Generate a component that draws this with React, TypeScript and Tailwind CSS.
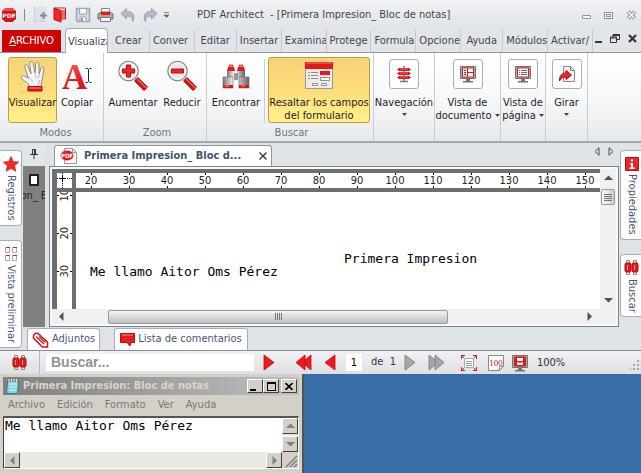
import React from 'react';

const redFill = '#e8191c';

function PdfMark() {
  return (
    <svg width="16" height="16" viewBox="0 0 16 16">
      <path d="M4.500 1h7L15 4v8l-3.500 3h-7L1 12V4z" fill="#d41418" />
      <path d="M1 4h14L11.500 1h-7z" fill="#ef4a4a" />
      <text x="8" y="10.500" fontSize="6" fontWeight="bold" textAnchor="middle" fill="#fff" fontFamily="DejaVu Sans">PDF</text>
    </svg>
  );
}

function PdfDoc() {
  return (
    <svg width="18" height="18" viewBox="0 0 18 18">
      <path d="M4.500 1.500h8l4 4v11h-12z" fill="#fafafa" stroke="#9a9a9a" />
      <path d="M12.500 1.500v4h4" fill="none" stroke="#9a9a9a" />
      <ellipse cx="7" cy="8.500" rx="6.500" ry="5" fill="#dc1a1c" />
      <text x="7" y="11" fontSize="6" fontWeight="bold" textAnchor="middle" fill="#fff" fontFamily="DejaVu Sans Condensed">PDF</text>
    </svg>
  );
}

function NewIcon() {
  return (
    <svg width="14" height="16" viewBox="0 0 14 16">
      <path d="M1 0v15h12V0" fill="#dfe3e7" />
      <path d="M1.500 0v14.500h11" fill="none" stroke="#c8cdd2" />
      <path d="M10.500 5v7M7 8.500h7" stroke="#858c92" strokeWidth="2" />
    </svg>
  );
}

function OpenIcon() {
  return (
    <svg width="14" height="16" viewBox="0 0 14 16">
      <path d="M1 1h11.500v11H8z" fill="#fff" stroke="#d01215" />
      <path d="M8 3h4v9H8z" fill="#f26a68" />
      <path d="M1 1l7 2.500V15l-7-2.500z" fill="#f0292b" stroke="#c20c10" />
    </svg>
  );
}

function SaveIcon() {
  return (
    <svg width="16" height="16" viewBox="0 0 16 16">
      <path d="M1.500 1.500h13v13h-12l-1-1z" fill="#d5d9e2" stroke="#9ea4b2" strokeWidth="1.500" />
      <path d="M4.500 2v5h7V2" fill="#f5f6f9" stroke="#9ea4b2" />
      <path d="M5 14v-4h6v4" fill="#f5f6f9" stroke="#9ea4b2" />
      <path d="M6 11h2v3H6z" fill="#8e95a5" />
    </svg>
  );
}

function PrintIcon() {
  return (
    <svg width="17" height="16" viewBox="0 0 17 16">
      <path d="M4.500 1.500h8V6h-8z" fill="#fff" stroke="#8a8a8a" />
      <path d="M1 7l3-2h9l3 2v5H1z" fill="#a9a9a9" stroke="#6c6c6c" />
      <path d="M4 5h9v3H4z" fill="#e51a1c" />
      <path d="M3.500 10.500h10v4h-10z" fill="#f6f6f6" stroke="#7b7b7b" />
    </svg>
  );
}

function UndoIcon({ flip = false }: { flip?: boolean }) {
  return (
    <svg width="16" height="16" viewBox="0 0 16 16" className={flip ? '-scale-x-100' : ''}>
      <path d="M1 6.500L6.500 1.500v3C12 4 16 8 12.500 14.500c.5-4-2-5.500-6-5.500v3z" fill="#b6b9ca" stroke="#9a9eb2" />
    </svg>
  );
}

function HandIcon() {
  return (
    <svg width="32" height="32" viewBox="0 0 32 32">
      <path d="M12.500 27c-.5-3-2.500-4.500-5-6L4.800 18.800c-1.500-1.700.4-3.800 2.300-2.800l4.400 2.200L7.800 7.500C7 4.900 9.800 4 10.800 6.300l3.200 7.500-1.300-10c-.2-2.700 2.800-3 3.400-.5l2 9.700.6-9.500c.2-2.500 3.200-2.200 3.200.2l.3 10.300 1.700-5.500c.8-2.300 3.500-1.400 3 .9L25.200 19c-.5 3-1.200 5-1.200 8z" fill="#f3f3f2" stroke="#85807a" strokeWidth=".9" />
      <path d="M11.500 18c2 .5 3.500 2 4 4M18 14l1 4M22 14.500l-.8 4M22.500 20l-1.500 6" fill="none" stroke="#bdbab5" />
      <path d="M11 26.500h14V31H11z" fill="#e3191b" stroke="#a60c10" />
      <path d="M12 28h12" stroke="#ff8b85" />
    </svg>
  );
}

function CopyTextIcon() {
  return (
    <svg width="32" height="32" viewBox="0 0 32 32">
      <defs>
        <linearGradient id="letter" x1="0" y1="0" x2="0" y2="1">
          <stop offset="0" stopColor="#ff6a60" />
          <stop offset=".5" stopColor="#e52226" />
          <stop offset="1" stopColor="#c70a10" />
        </linearGradient>
      </defs>
      <text x="1" y="29" fontSize="35" fontWeight="bold" fontFamily="Liberation Serif" fill="url(#letter)">A</text>
      <path d="M24.500 8.500h2l1 1 1-1h2M27.500 9.500v12M24.500 22.500h2l1-1 1 1h2" fill="none" stroke="#222" />
    </svg>
  );
}

function MagnifierIcon({ plus = false }: { plus?: boolean }) {
  return (
    <svg width="32" height="32" viewBox="0 0 32 32">
      <path d="M19 19l10 10" stroke="#8d0b0e" strokeWidth="5.500" />
      <path d="M19 19l10 10" stroke="#e3191b" strokeWidth="3.500" />
      <path d="M20 18.500l9.500 9.500" stroke="#ff9a94" />
      <circle cx="11.500" cy="11" r="9.700" fill="#e6e8ec" stroke="#8a8a8a" strokeWidth="1.300" />
      <circle cx="11.500" cy="11" r="8.300" fill="none" stroke="#fff" />
      <path d={plus ? 'M9.500 5h4v4h4v4h-4v4h-4v-4h-4V9h4z' : 'M5.500 9h12v4h-12z'} fill="#e8282a" stroke="#b30e12" />
    </svg>
  );
}

function BinocularsIcon() {
  return (
    <svg width="32" height="32" viewBox="0 0 32 32">
      <defs>
        <linearGradient id="tube">
          <stop offset="0" stopColor="#777" />
          <stop offset=".4" stopColor="#f6f6f6" />
          <stop offset="1" stopColor="#666" />
        </linearGradient>
      </defs>
      <path d="M9 5h4v3H9zM19 5h4v3h-4z" fill="#ff8a84" stroke="#8b1113" strokeWidth=".6" />
      <path d="M8 7h6l1 4H7zM18 7h6l1 4h-8z" fill="#e3191b" />
      <path d="M7 11h8v6H7zM17 11h8v6h-8z" fill="url(#tube)" />
      <path d="M14 13h4v7h-4z" fill="#999" />
      <path d="M3 17h10v11H3zM19 17h10v11H19z" fill="url(#tube)" stroke="#666" strokeWidth=".6" />
      <path d="M3 25h10v3H3zM19 25h10v3H19z" fill="#d91719" />
      <path d="M5 26h4M21 26h4" stroke="#ff9a94" />
    </svg>
  );
}

function FormIcon() {
  return (
    <svg width="32" height="32" viewBox="0 0 32 32">
      <path d="M2.500 2.500h27v26h-27z" fill="#ececec" stroke="#999" />
      <path d="M2 2h28v7H2z" fill="#e3191b" />
      <path d="M3 3h26" stroke="#ff7a70" />
      <path d="M5 12.500h2M8 12.500h7M5 15.500h2M8 15.500h7M5 18.500h2M8 18.500h7" stroke="#8c8c8c" />
      <path d="M17 11h10v4H17z" fill="#e3191b" />
      <path d="M17.500 17.500h9v3h-9zM9.500 23.500h5v2h-5zM18.500 23.500h5v2h-5z" fill="#fff" stroke="#8c8c8c" />
    </svg>
  );
}

function SignpostIcon() {
  return (
    <svg width="18" height="18" viewBox="0 0 18 18">
      <path d="M9 1v16M5 16.500h8" stroke="#777" strokeWidth="1.500" />
      <path d="M4 3h10l2 1.500L14 6H4L2 4.500zM4 7h10l2 1.500-2 1.500H4L2 8.500zM4 11h10l2 1.500-2 1.500H4l-2-1.500z" fill="#dc1a1c" />
      <path d="M5 4h8M5 8h8M5 12h8" stroke="#ff8a84" strokeWidth=".7" />
    </svg>
  );
}

function MonitorIcon({ kind }: { kind: 'split' | 'list' | 'fit' }) {
  return (
    <svg width="18" height="18" viewBox="0 0 18 18">
      <path d="M1.500 1.500h15v12h-15z" fill="#aaa" stroke="#737373" />
      <path d="M7 14h4v2H7zM4 16h10v1.500H4z" fill="#737373" />
      <path d="M3.500 3h11v9h-11z" fill={kind === 'fit' ? '#e01618' : '#fff'} stroke="#e01618" />
      {kind === 'split' && <path d="M8.500 3v9M9 7.500h5.500M5 5.500h2M5 7.500h2M5 9.500h2" stroke="#e01618" />}
      {kind === 'list' && <path d="M5 5.500h1M7 5.500h6M5 7.500h1M7 7.500h6M5 9.500h1M7 9.500h6" stroke="#666" />}
      {kind === 'fit' && <path d="M6 4h6v3H6zM6 8.500h6V11H6z" fill="#fff" />}
    </svg>
  );
}

function RotateIcon() {
  return (
    <svg width="18" height="18" viewBox="0 0 18 18">
      <path d="M5.500 1.500h7l4 4v11h-11z" fill="#f3f3f3" stroke="#888" />
      <path d="M12.500 1.500v4h4" fill="none" stroke="#888" />
      <path d="M1.500 16C1 11 4 8 8 8V5.500l5.500 4.500L8 14.500V12c-3 0-5 1-6.500 4z" fill="#e8282a" stroke="#a90e12" />
    </svg>
  );
}

function SmallBinoculars() {
  return (
    <svg width="15" height="17" viewBox="0 0 15 17">
      <path d="M2.500 1.500h3v3h-3zM9.500 1.500h3v3h-3zM2.500 12.500h3v3h-3zM9.500 12.500h3v3h-3z" fill="#eee" stroke="#888" />
      <rect x="1" y="4" width="6" height="9" rx="1.500" fill={redFill} stroke="#a80d10" />
      <rect x="8" y="4" width="6" height="9" rx="1.500" fill={redFill} stroke="#a80d10" />
      <path d="M3.500 6v5M10.500 6v5" stroke="#ff928c" />
    </svg>
  );
}

function StarIcon() {
  return (
    <svg width="16" height="16" viewBox="0 0 16 16">
      <path d="M8 .5l2.300 5 5.400.6-4 3.700 1.100 5.500L8 12.600l-4.800 2.700 1.100-5.500-4-3.700 5.400-.6z" fill="#ee2a2b" stroke="#c51519" strokeWidth=".6" />
    </svg>
  );
}

function ThumbsIcon() {
  return (
    <svg width="14" height="16" viewBox="0 0 14 16">
      <path d="M1.500 1.500h4v5h-4zM8.500 1.500h4v5h-4zM1.500 9.500h4v5h-4zM8.500 9.500h4v5h-4z" fill="#fff" stroke="#aaa" />
      <path d="M2 1.500h4M9 1.500h4M2 9.500h4M9 9.500h4" stroke="#d3292b" />
    </svg>
  );
}

function InfoIcon() {
  return (
    <svg width="14" height="14" viewBox="0 0 14 14">
      <path d="M.5.5h13v13H.5z" fill="#e8282a" stroke="#b50f13" />
      <path d="M6 2.500h2v2H6zM5 6h3v4.500h1.500V12h-5v-1.500H6V7.500H5z" fill="#fff" />
    </svg>
  );
}

function ClipIcon() {
  return (
    <svg width="18" height="18" viewBox="0 0 18 18">
      <path d="M6 2.500l9.500 8.500v5h-5L1.800 7.500C.5 4 3 1.500 6 2.500z" fill="#fff" stroke="#d01418" strokeWidth="1.500" />
      <path d="M4 5.500l8 7.500M7 5.500l6.500 6" fill="none" stroke="#c41418" strokeWidth="1.200" />
    </svg>
  );
}

function CommentIcon() {
  return (
    <svg width="15" height="14" viewBox="0 0 15 14">
      <path d="M.5.5h14v9H11l-1 3.500-3-3.500H.5z" fill="#e42022" stroke="#b60f13" />
      <path d="M2 2h11" stroke="#ff827a" />
    </svg>
  );
}

function Arrow({ left = false, double = false, grey = false }: { left?: boolean; double?: boolean; grey?: boolean }) {
  const fill = grey ? '#a6a6a6' : '#f01a1c';
  const edge = grey ? '#777' : '#b80c10';
  return (
    <svg width={double ? 17 : 12} height="17" viewBox={double ? '0 0 17 17' : '0 0 12 17'} className={left ? '-scale-x-100' : ''}>
      {double ? (
        <>
          <path d="M1 1l9 7.500L1 16z" fill={fill} stroke={edge} strokeWidth=".8" />
          <path d="M7 1l9 7.500L7 16z" fill={fill} stroke={edge} strokeWidth=".8" />
        </>
      ) : (
        <path d="M1 1l10 7.500L1 16z" fill={fill} stroke={edge} strokeWidth=".8" />
      )}
    </svg>
  );
}

function Triangle({ dir, className = 'fill-[#4d535c]' }: { dir: 'up' | 'down' | 'left' | 'right'; className?: string }) {
  const shapes = { up: 'M0 6l4.500-4.500L9 6z', down: 'M0 2l4.500 4.500L9 2z', left: 'M6.500 0L2 4.500 6.500 9z', right: 'M2.500 0L7 4.500 2.500 9z' };
  return (
    <svg width="9" height="9" viewBox="0 0 9 9" className={className}>
      <path d={shapes[dir]} />
    </svg>
  );
}

function Caret({ className }: { className: string }) {
  return (
    <svg width="5" height="3" viewBox="0 0 5 3" className={`fill-[#444] ${className}`}>
      <path d="M0 0h5L2.500 3z" />
    </svg>
  );
}

const ribbonTabs = ['Crear', 'Conver', 'Editar', 'Insertar', 'Examina', 'Protege', 'Formula', 'Opcione', 'Ayuda', 'Módulos', 'Activar/'];
const centredTabs = ['Crear', 'Editar', 'Ayuda'];

function BigButton({ icon, label, active = false, className }: { icon: React.ReactNode; label: React.ReactNode; active?: boolean; className: string }) {
  return (
    <button
      className={`flex h-[66px] flex-col items-center gap-1 rounded-[3px] border pt-[2px] leading-[13px] whitespace-nowrap ${className} ${
        active ? 'border-[#c29b47] bg-linear-to-b from-[#f8d479] via-[#fddc7b] to-[#fff18c]' : 'border-transparent'
      }`}
    >
      <span className="flex h-8 shrink-0 items-center">{icon}</span>
      <span>{label}</span>
    </button>
  );
}

function MenuButton({ icon, label, below = false, className }: { icon: React.ReactNode; label: React.ReactNode; below?: boolean; className: string }) {
  return (
    <button className={`flex flex-col items-center gap-[7px] border-r border-[#c9cdd2] pt-[6px] leading-[13px] whitespace-nowrap ${className}`}>
      <span className="flex h-[30px] w-[30px] shrink-0 items-center justify-center rounded-[3px] border border-[#a9acb0] bg-white">{icon}</span>
      <span>
        {label}
        {below && <Caret className="mx-auto mt-1 block" />}
      </span>
    </button>
  );
}

function Group({ title, children, className }: { title: string; children: React.ReactNode; className: string }) {
  return (
    <div className={`flex flex-col border-r border-[#c9cdd2] pt-1 ${className}`}>
      <div className="flex">{children}</div>
      <div className="pt-[2px] text-center leading-[15px] text-[#6c7486]">{title}</div>
    </div>
  );
}

function TitleBar() {
  return (
    <header className="flex h-7 items-center bg-linear-to-b from-[#f0f2f4] to-[#e0e4e8] pt-[2px] pl-[1px]">
      <PdfMark />
      <span className="ml-[7px] h-3 w-px bg-[#888]" />
      <div className="ml-2 flex items-center gap-[6px]">
        <button aria-label="Nuevo"><NewIcon /></button>
        <button aria-label="Abrir"><OpenIcon /></button>
        <button aria-label="Guardar" className="ml-[2px]"><SaveIcon /></button>
        <button aria-label="Imprimir"><PrintIcon /></button>
        <button aria-label="Deshacer"><UndoIcon /></button>
        <button aria-label="Rehacer"><UndoIcon flip /></button>
        <button aria-label="Personalizar">
          <svg width="5" height="7" viewBox="0 0 5 7"><path d="M0 .5h5M0 3h5L2.500 5.500z" fill="#666" stroke="#666" strokeWidth=".7" /></svg>
        </button>
      </div>
      <h1 className="ml-7 flex-1 truncate text-[#41454d]">PDF Architect&nbsp; - [Primera Impresion_ Bloc de notas]</h1>
      <div className="flex items-center gap-[13px] pr-1">
        <button aria-label="Minimizar" className="mt-[3px] h-1 w-[9px] rounded-[1px] border border-[#8b9097] bg-white" />
        <button aria-label="Restaurar" className="flex h-[7px] w-[9px] items-center justify-center border border-[#8b9097] bg-white">
          <span className="h-[3px] w-[5px] border border-[#8b9097]" />
        </button>
        <button aria-label="Cerrar">
          <svg width="11" height="10" viewBox="0 0 11 10">
            <path d="M2 1.500l7 7M9 1.500l-7 7" stroke="#858b92" strokeWidth="3.500" />
            <path d="M2 1.500l7 7M9 1.500l-7 7" stroke="#fff" strokeWidth="1.500" />
          </svg>
        </button>
      </div>
    </header>
  );
}

function Tabs() {
  return (
    <nav className="flex h-[25px] border-b border-[#8f979f] bg-[#e1e4e8] text-[#41454d]">
      <button className="mt-[2px] mr-1 ml-[2px] w-[59px] bg-[#cf0404] text-white"><u>A</u>RCHIVO</button>
      <button className="-mb-px w-[43px] overflow-hidden rounded-t-[4px] border border-b-0 border-[#a4abb2] bg-white pt-[2px] pl-[2px] text-left whitespace-nowrap">Visualiza</button>
      <div className="flex min-w-0 flex-1 pt-[2px]">
        {ribbonTabs.map((t) => (
          <button key={t} className={`min-w-0 flex-1 overflow-hidden border-r border-[#c6cad0] whitespace-nowrap ${centredTabs.includes(t) ? 'text-center' : 'pl-[3px] text-left'}`}>
            {t}
          </button>
        ))}
      </div>
      <div className="flex w-12 items-center justify-end gap-2 pr-1 pb-1">
        <button aria-label="Minimizar documento" className="mt-2 h-[2px] w-[7px] bg-[#333]" />
        <button aria-label="Restaurar documento">
          <svg width="10" height="9" viewBox="0 0 10 9"><path d="M3 3V.5h6.500v5H7M.5 3h6v5.500h-6zM3 1.500h6.500M.5 4h6" fill="none" stroke="#333" /></svg>
        </button>
        <button aria-label="Cerrar documento">
          <svg width="9" height="9" viewBox="0 0 9 9"><path d="M1 1l7 7M8 1L1 8" stroke="#333" strokeWidth="2.200" /></svg>
        </button>
      </div>
    </nav>
  );
}

function Ribbon() {
  return (
    <section className="flex h-[90px] border-b-2 border-[#a2a8ae] bg-linear-to-b from-white via-[#f7f8f9] to-[#e7eaed] pl-[3px]">
      <Group title="Modos" className="w-[101px] pl-[5px]">
        <BigButton icon={<HandIcon />} label="Visualizar" active className="w-[49px]" />
        <BigButton icon={<CopyTextIcon />} label="Copiar" className="w-10" />
      </Group>
      <Group title="Zoom" className="w-[103px] pl-1">
        <BigButton icon={<MagnifierIcon plus />} label="Aumentar" className="w-[50px]" />
        <BigButton icon={<MagnifierIcon />} label="Reducir" className="w-12" />
      </Group>
      <Group title="Buscar" className="w-[167px] pl-[3px]">
        <BigButton icon={<BinocularsIcon />} label="Encontrar" className="w-[52px]" />
        <span className="mt-[2px] mr-[3px] ml-[2px] w-px bg-[#c9cdd2]" />
        <BigButton icon={<FormIcon />} label={<>Resaltar los campos<br />del formulario</>} active className="w-[102px]" />
      </Group>
      <MenuButton icon={<SignpostIcon />} label="Navegación" below className="w-[61px]" />
      <MenuButton icon={<MonitorIcon kind="split" />} label={<>Vista de<br />documento<Caret className="mb-[2px] ml-[3px] inline" /></>} className="w-[66px]" />
      <MenuButton icon={<MonitorIcon kind="list" />} label={<>Vista de<br />página<Caret className="mb-[2px] ml-[3px] inline" /></>} className="w-[45px]" />
      <MenuButton icon={<RotateIcon />} label="Girar" below className="w-[42px]" />
    </section>
  );
}

const ruler = [20, 30, 40, 50, 60, 70, 80, 90, 100, 110, 120, 130, 140, 150];

function SideTab({ icon, label, right = false, className }: { icon: React.ReactNode; label: string; right?: boolean; className: string }) {
  return (
    <button
      className={`flex w-[22px] flex-col items-center gap-[3px] border border-[#a9aeb4] bg-white text-[#4a5674] ${right ? 'rounded-l-[4px] border-r-0' : 'rounded-r-[4px] border-l-0'} ${className}`}
    >
      {icon}
      <span className="leading-4 whitespace-nowrap [writing-mode:vertical-rl]">{label}</span>
    </button>
  );
}

function Document() {
  return (
    <main className="flex h-[182px] min-w-0 flex-1 flex-col">
      <div className="flex h-[21px] pl-[5px]">
        <div className="z-10 flex w-[218px] items-center gap-[6px] rounded-t-[3px] border border-b-0 border-[#8e969e] bg-white pr-1 pl-[5px] font-bold text-[#3c546e]">
          <PdfDoc />
          <span className="min-w-0 flex-1 whitespace-nowrap">Primera Impresion_ Bloc d...</span>
          <button aria-label="Cerrar pestaña">
            <svg width="8" height="8" viewBox="0 0 8 8"><path d="M.5.5l7 7M7.500.500l-7 7" stroke="#333" strokeWidth="1.300" /></svg>
          </button>
        </div>
        <div className="flex flex-1 items-center justify-end gap-2 pr-[5px] pb-2">
          <button aria-label="Anterior"><svg width="6" height="9" viewBox="0 0 6 9"><path d="M5 .7L1 4.500l4 3.800z" fill="none" stroke="#444" /></svg></button>
          <button aria-label="Siguiente"><svg width="6" height="9" viewBox="0 0 6 9"><path d="M1 .7l4 3.800-4 3.800z" fill="none" stroke="#444" /></svg></button>
        </div>
      </div>
      <div className="flex min-h-0 flex-1 flex-col border border-[#6f8799] bg-[#f8f8f6] p-[2px]">
        <div className="flex min-h-0 flex-1">
          <div className="flex min-w-0 flex-1 flex-col gap-1 bg-[#6e6e6e] pt-1 pl-[5px]">
            <div className="flex h-[15px] shrink-0 gap-1">
              <div className="flex w-[15px] shrink-0 items-center justify-center bg-white">
                <svg width="15" height="15" viewBox="0 0 15 15"><path d="M0 5.500h15M5.500 0v15" stroke="#000" strokeDasharray="1 1" /><path d="M3 5.500h5M5.500 3v5" stroke="#000" /></svg>
              </div>
              <div className="min-w-0 flex-1 overflow-hidden bg-white">
                <div className="-mr-1 -ml-1 flex">
                  {ruler.map((n) => (
                    <span key={n} className="flex flex-1 flex-col items-center leading-[11px] text-[#222]">
                      <i className="h-[2px] w-px bg-black" />
                      {n}
                      <i className="h-[2px] w-px bg-black" />
                    </span>
                  ))}
                </div>
              </div>
            </div>
            <div className="flex min-h-0 flex-1 gap-1">
              <div className="flex w-[15px] shrink-0 flex-col overflow-hidden bg-white">
                {[10, 20, 30].map((n) => (
                  <span key={n} className={`flex h-[38px] w-[15px] shrink-0 items-center leading-[11px] text-[#222] ${n === 10 ? '-mt-4' : ''}`}>
                    <i className="h-px w-[2px] bg-black" />
                    <span className="rotate-180 [writing-mode:vertical-rl]">{n}</span>
                    <i className="h-px w-[2px] bg-black" />
                  </span>
                ))}
              </div>
              <div className="min-w-0 flex-1 overflow-hidden bg-white pt-[60px] pl-[14px] font-['DejaVu_Sans_Mono',monospace] text-[13px] leading-[13px] whitespace-nowrap text-black">
                <p className="pl-[254px]">Primera Impresion</p>
                <p>Me llamo Aitor Oms Pérez</p>
              </div>
            </div>
          </div>
          <div className="flex w-4 flex-col items-center bg-[#f0f0f0] pt-[5px] pb-1">
            <Triangle dir="up" />
            <span className="mt-[6px] flex h-4 w-[14px] flex-col items-center justify-center gap-px rounded-[2px] border border-[#999] bg-linear-to-r from-white to-[#ccc]">
              {[1, 2, 3, 4].map((i) => <i key={i} className="h-px w-2 bg-[#777]" />)}
            </span>
            <span className="flex-1" />
            <Triangle dir="down" />
          </div>
        </div>
        <div className="flex h-[15px] shrink-0 items-center bg-[#f0f0f0] pr-[22px] pl-[5px]">
          <Triangle dir="left" />
          <div className="flex h-[14px] flex-1 pr-[137px] pl-[42px]">
            <span className="flex flex-1 items-center justify-center gap-px rounded-[2px] border border-[#999] bg-linear-to-b from-[#f4f4f4] to-[#bfc0c4]">
              {[1, 2, 3, 4].map((i) => <i key={i} className="h-[7px] w-px bg-[#777]" />)}
            </span>
          </div>
          <Triangle dir="right" />
        </div>
      </div>
    </main>
  );
}

function Workspace() {
  return (
    <section className="flex bg-[#dfe3e6] pt-[2px]">
      <div className="flex w-[22px] shrink-0 flex-col gap-[14px] pt-[5px]">
        <SideTab icon={<StarIcon />} label="Registros" className="h-[76px] pt-[5px]" />
        <SideTab icon={<ThumbsIcon />} label="Vista preliminar" className="h-[108px] pt-[5px]" />
      </div>
      <div className="flex min-w-0 flex-1 flex-col">
        <div className="flex gap-1">
          <div className="ml-px flex h-[182px] w-[22px] shrink-0 flex-col bg-[#808080] text-[#222]">
            <button aria-label="Fijar" className="flex h-[21px] shrink-0 items-center justify-center bg-[#e3e6e9] pb-1">
              <svg width="8" height="10" viewBox="0 0 8 10"><path d="M2.500 5V.5h3V5M4.500 1v4M0 5.500h8M4 6v4" fill="none" stroke="#333" /></svg>
            </button>
            <span className="mx-auto mt-[8px] h-[12px] w-[10px] shrink-0 border-2 border-[#222] bg-white" />
            <span className="mt-[2px] flex justify-center overflow-hidden whitespace-nowrap">on_ B</span>
          </div>
          <Document />
        </div>
        <div className="flex h-[23px] gap-[14px] pt-px pl-[5px] text-[#4a5674]">
          <button className="flex items-center gap-[2px] rounded-t-[3px] border border-b-0 border-[#a9aeb4] bg-white px-1"><ClipIcon />Adjuntos</button>
          <button className="flex items-center gap-[3px] rounded-t-[3px] border border-b-0 border-[#a9aeb4] bg-white px-[5px]"><CommentIcon />Lista de comentarios</button>
        </div>
      </div>
      <div className="ml-[1px] flex w-[21px] shrink-0 flex-col gap-[14px] pt-[5px]">
        <SideTab right icon={<InfoIcon />} label="Propiedades" className="h-[90px] pt-[6px]" />
        <SideTab right icon={<SmallBinoculars />} label="Buscar" className="h-[63px] pt-1" />
      </div>
    </section>
  );
}

function StatusBar() {
  return (
    <footer className="flex h-6 items-center border-t border-[#888d93] bg-linear-to-b from-[#f1f2f5] to-[#dddfe4] text-[#333]">
      <span className="flex w-[39px] justify-center"><SmallBinoculars /></span>
      <span className="h-full w-px bg-[#b5b8be]" />
      <input aria-label="Buscar" placeholder="Buscar..." className="ml-[6px] h-[17px] w-[208px] bg-white px-[5px] font-['Liberation_Sans',sans-serif] text-[14px] font-bold placeholder:text-[#929292]" />
      <button aria-label="Buscar siguiente" className="ml-[9px]"><Arrow /></button>
      <button aria-label="Primera página" className="ml-5"><Arrow left double /></button>
      <button aria-label="Página anterior" className="ml-3"><Arrow left /></button>
      <input aria-label="Página" defaultValue="1" className="ml-[10px] h-[17px] w-4 bg-white text-center text-black" />
      <span className="ml-[9px]">de&nbsp; 1</span>
      <button aria-label="Página siguiente" className="ml-2"><Arrow grey /></button>
      <button aria-label="Última página" className="ml-3"><Arrow grey double /></button>
      <button aria-label="Ajustar" className="ml-4">
        <svg width="16" height="16" viewBox="0 0 16 16">
          <path d="M3.500 3.500h9v9h-9z" fill="#fff" stroke="#aaa" />
          <path d="M5 6.500h6M5 8.500h6M5 10.500h6" stroke="#999" />
          <path d="M0 .5h4M.5 0v4M1 1l2 2M12 .5h4M15.500 0v4M15 1l-2 2M.5 12v4M0 15.500h4M1 15l2-2M15.500 12v4M12 15.500h4M15 15l-2-2" stroke="#e0191b" />
        </svg>
      </button>
      <button aria-label="Tamaño real" className="ml-[11px]">
        <svg width="16" height="16" viewBox="0 0 16 16">
          <path d="M.5.5h15v11l-4 4H.5z" fill="#fafafa" stroke="#888" />
          <path d="M15.500 11.500h-4v4" fill="none" stroke="#888" />
          <text x="8" y="10.500" fontSize="9" textAnchor="middle" fill="#e01215" fontFamily="Liberation Serif">100</text>
        </svg>
      </button>
      <button aria-label="Ajustar a pantalla" className="ml-[7px]"><MonitorIcon kind="fit" /></button>
      <span className="ml-2 pt-[2px]">100%</span>
      <svg width="10" height="10" viewBox="0 0 10 10" className="mt-auto mr-px mb-1 ml-auto"><path d="M7 0h2v2H7zM7 4h2v2H7zM7 8h2v2H7zM3 4h2v2H3zM3 8h2v2H3zM0 8h1v2H0z" fill="#a8abb0" /></svg>
    </footer>
  );
}

const bevel = 'flex items-center justify-center border border-t-white border-l-white border-r-[#404040] border-b-[#404040] bg-[#d4d0c8]';

function Notepad() {
  return (
    <section className="w-[304px] border-r-2 border-[#55534f] bg-[#d4d0c8] px-[3px] pt-[3px] pb-1 text-[#7b7872]">
      <div className="flex h-[18px] items-center bg-linear-to-r from-[#808080] to-[#c0c0c0] pr-[2px] pl-[3px] font-bold text-[#d8d5ce]">
        <svg width="13" height="15" viewBox="0 0 13 15">
          <path d="M1.500 2.500h11l-1 12H.500z" fill="#8ad3df" stroke="#377886" />
          <path d="M3 5h8M3 8h8M3 11h7" stroke="#d7f5fa" />
          <path d="M3 0v3M5.500 0v3M8 0v3M10.500 0v3" stroke="#eee" />
        </svg>
        <h2 className="ml-1 flex-1 truncate">Primera Impresion: Bloc de notas</h2>
        <button aria-label="Minimizar bloc" className={`h-[14px] w-4 ${bevel}`}><span className="mt-[7px] mr-1 h-[2px] w-[6px] bg-black" /></button>
        <button aria-label="Maximizar bloc" className={`h-[14px] w-4 ${bevel}`}><span className="h-[9px] w-[9px] border border-t-2 border-black" /></button>
        <button aria-label="Cerrar bloc" className={`ml-[2px] h-[14px] w-4 ${bevel}`}>
          <svg width="8" height="7" viewBox="0 0 8 7"><path d="M.500 0l7 7M7.500 0l-7 7" stroke="#000" strokeWidth="1.600" /></svg>
        </button>
      </div>
      <div className="flex h-[21px] items-center gap-3 pl-[5px]">
        {['Archivo', 'Edición', 'Formato', 'Ver', 'Ayuda'].map((m) => <button key={m}>{m}</button>)}
      </div>
      <div className="flex h-[53px] flex-col border border-t-2 border-t-[#555] border-r-white border-b-white border-l-[#404040]">
        <div className="flex flex-1">
          <textarea aria-label="Texto" defaultValue="Me llamo Aitor Oms Pérez" className="block h-[34px] min-w-0 flex-1 resize-none overflow-hidden bg-white pl-px font-['DejaVu_Sans_Mono',monospace] text-[13px] leading-[15px] text-black" />
          <div className="flex w-4 flex-col justify-between bg-[#eae8e3]">
            <button aria-label="Subir" className={`h-4 w-4 ${bevel}`}><Triangle dir="up" className="fill-[#808080]" /></button>
            <button aria-label="Bajar" className={`h-4 w-4 ${bevel}`}><Triangle dir="down" className="fill-[#808080]" /></button>
          </div>
        </div>
        <div className="flex h-4 justify-between bg-[#eae8e3]">
          <button aria-label="Izquierda" className={`h-4 w-4 ${bevel}`}><Triangle dir="left" className="fill-[#808080]" /></button>
          <div className="flex">
            <button aria-label="Derecha" className={`h-4 w-4 ${bevel}`}><Triangle dir="right" className="fill-[#808080]" /></button>
            <svg width="16" height="16" viewBox="0 0 16 16" className="bg-[#d4d0c8]"><path d="M4 15L15 4M8 15l7-7M12 15l3-3" stroke="#808080" strokeWidth="1.500" /></svg>
          </div>
        </div>
      </div>
    </section>
  );
}

export default function App() {
  return (
    <div className="flex min-h-screen flex-col overflow-hidden bg-[#396da5] font-['DejaVu_Sans_Condensed','Noto_Sans',sans-serif] text-[11px] text-[#1e1e1e]">
      <TitleBar />
      <Tabs />
      <Ribbon />
      <Workspace />
      <StatusBar />
      <Notepad />
    </div>
  );
}
